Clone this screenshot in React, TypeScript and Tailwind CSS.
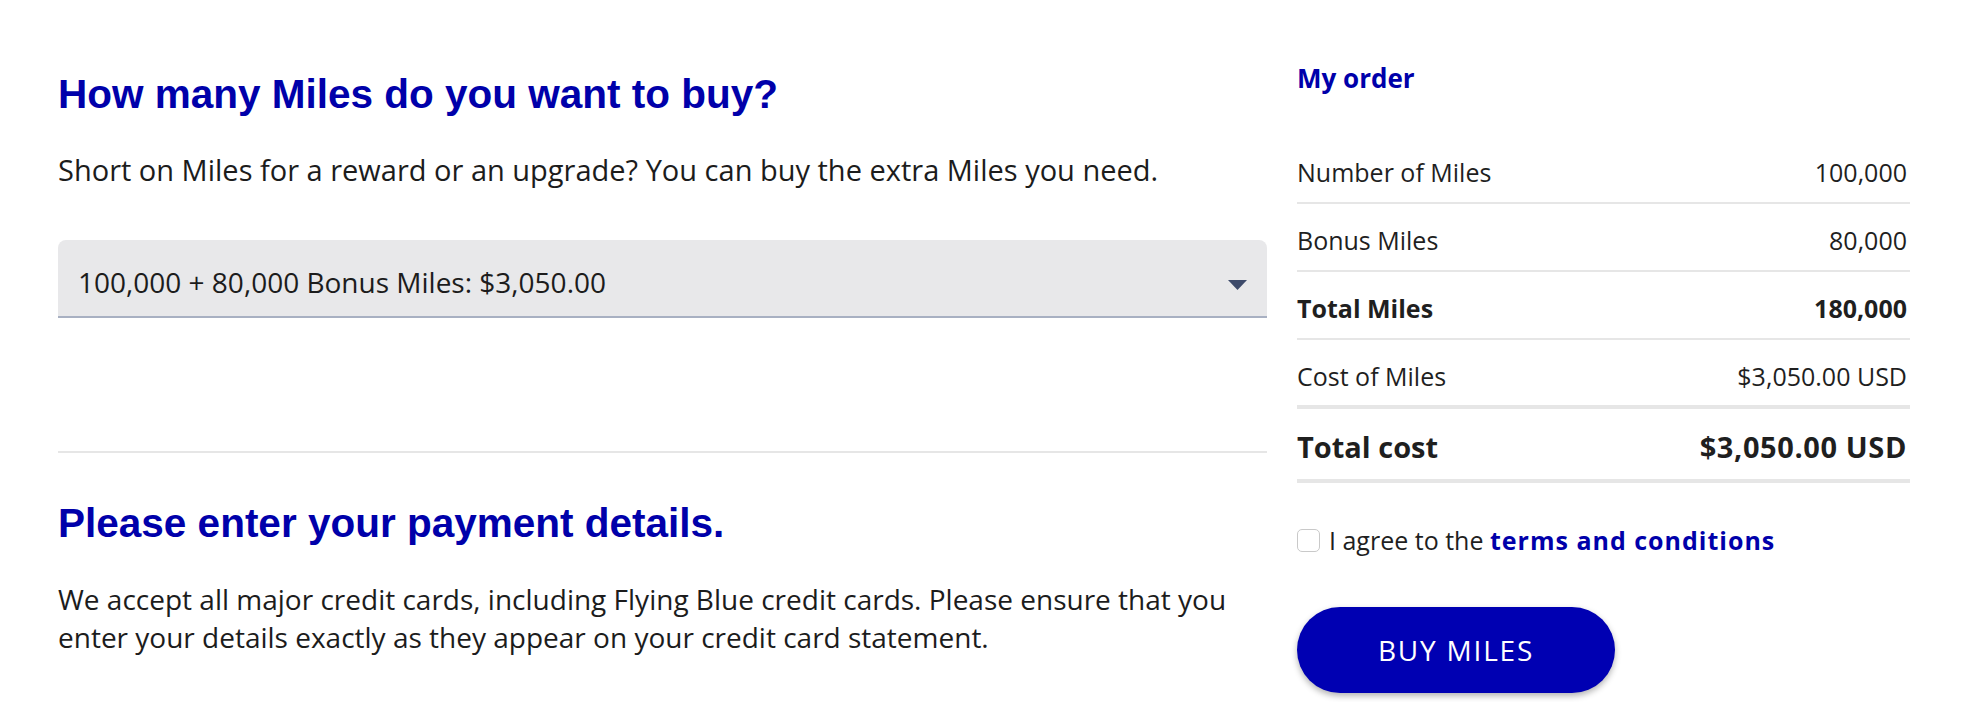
import React from "react";

const open = { fontFamily: '"Open Sans", "Liberation Sans", sans-serif' };
const arial = { fontFamily: '"Liberation Sans", Arial, sans-serif' };

function Row({ label, value, bold = false, thick = false, last = false }: { label: string; value: string; bold?: boolean; thick?: boolean; last?: boolean }) {
  const txt = last
    ? "text-[29px] leading-[38px] font-bold"
    : bold
    ? "text-[25px] leading-[32px] font-bold"
    : "text-[25px] leading-[32px]";
  return (
    <div
      className={
        "flex justify-between items-start " +
        (thick ? "pb-[13px] border-b-4 border-[#e6e6e6] " : "pb-[14px] border-b-2 border-[#e6e6e6] ") +
        (last ? "pt-[19px]" : "pt-5")
      }
    >
      <span className={txt + " text-[#1f1f1f]"}>{label}</span>
      <span className={txt + " text-[#1f1f1f] pr-[3px]" + (last ? " tracking-[0.6px]" : "")}>{value}</span>
    </div>
  );
}

export default function App() {
  return (
    <div className="w-full h-[702px] bg-white overflow-hidden" style={open}>
      <div className="flex gap-[30px] pl-[58px]">
        {/* Left column */}
        <div className="w-[1209px] pt-[70px] flex flex-col">
          <h1 className="text-[40.5px] leading-[48px] font-bold text-[#0000aa]" style={arial}>
            How many Miles do you want to buy?
          </h1>
          <p className="mt-[33px] text-[29px] leading-[38px] text-[#1c1c1c]">
            Short on Miles for a reward or an upgrade? You can buy the extra Miles you need.
          </p>
          <div className="mt-[51px] h-[78px] bg-[#e8e8ea] rounded-t-[8px] border-b-2 border-[#a8b0c2] flex items-start justify-between pl-5 pr-5 pt-[23px]">
            <span className="text-[28px] leading-[38px] text-[#1c1c1c]">100,000 + 80,000 Bonus Miles: $3,050.00</span>
            <svg width="19" height="10" viewBox="0 0 19 10" className="mt-[17px]">
              <polygon points="0,0 19,0 9.5,10" fill="#3d4a6a" />
            </svg>
          </div>
          <div className="mt-[133px] h-[2px] bg-[#e6e6e6]" />
          <h2 className="mt-[46px] text-[40.5px] leading-[48px] font-bold text-[#0000aa]" style={arial}>
            Please enter your payment details.
          </h2>
          <p className="mt-[33px] text-[28px] leading-[38px] text-[#1c1c1c]">
            We accept all major credit cards, including Flying Blue credit cards. Please ensure that you enter your details exactly as they appear on your credit card statement.
          </p>
        </div>

        {/* Right column */}
        <div className="w-[613px] pt-[60px] flex flex-col">
          <h3 className="text-[26px] leading-[36px] font-bold text-[#0000aa]">My order</h3>
          <div className="mt-[40px] flex flex-col">
            <Row label="Number of Miles" value="100,000" />
            <Row label="Bonus Miles" value="80,000" />
            <Row label="Total Miles" value="180,000" bold />
            <Row label="Cost of Miles" value="$3,050.00 USD" thick />
            <Row label="Total cost" value="$3,050.00 USD" thick last />
          </div>
          <label className="mt-[41px] flex items-center gap-[9px]">
            <span className="w-[23px] h-[23px] rounded-[5px] border border-[#c9c9c9] bg-white shrink-0" />
            <span className="text-[25px] leading-[32px] text-[#1f1f1f]">
              I agree to the <span className="font-bold text-[#0000aa] tracking-[1px]">terms and conditions</span>
            </span>
          </label>
          <button className="mt-[51px] w-[318px] h-[86px] rounded-full bg-[#0000b2] text-white text-[28px] tracking-[1.8px] shadow-[0_3px_6px_rgba(0,0,0,0.3)]">
            BUY MILES
          </button>
        </div>
      </div>
    </div>
  );
}
